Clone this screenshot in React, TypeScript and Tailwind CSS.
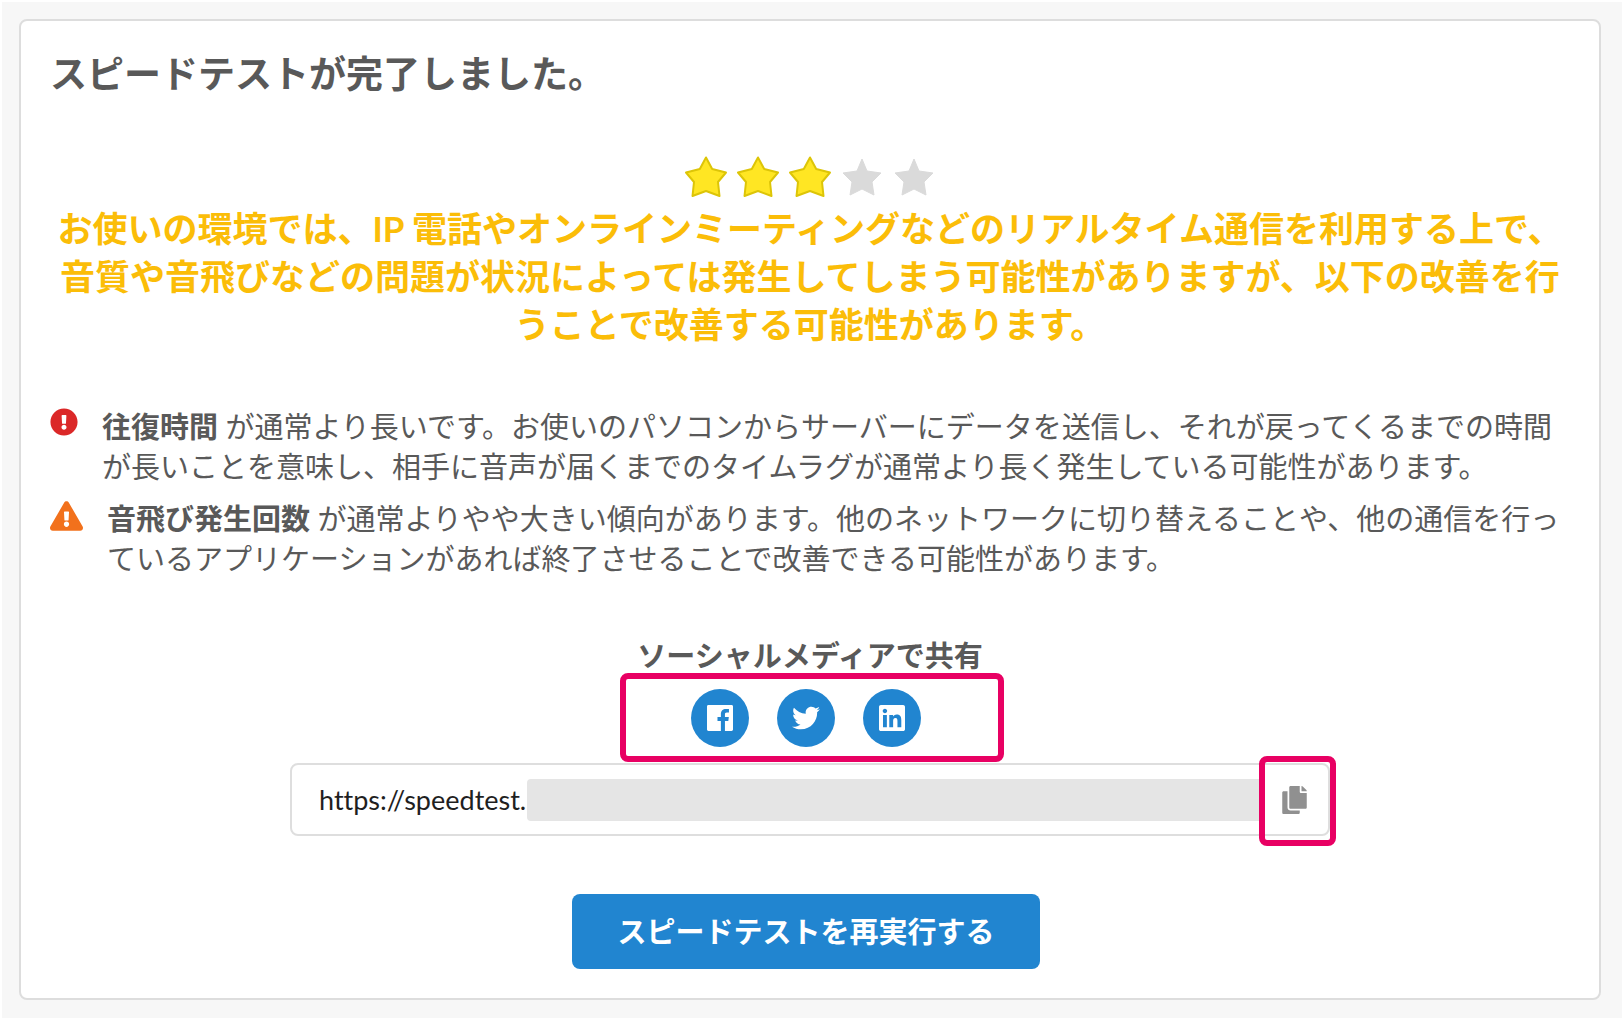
import React from "react";
import {
  FaCopy,
  FaExclamationCircle,
  FaExclamationTriangle,
  FaLinkedin,
  FaTwitter,
} from "react-icons/fa";

const ACTIVE_STAR_PATH =
  "M21 1.5 L27.2 13 L41 16.5 L33 26 L34.5 40 L21 35 L7.5 40 L9 26 L1 16.5 L14.8 13 Z";
const IDLE_STAR_PATH =
  "M21 3 L26 15 L40 17 L31 26 L33 39 L21 33 L9 39 L11 26 L2 17 L16 15 Z";

function Star({ active }: { active: boolean }) {
  return (
    <svg viewBox="0 0 42 42" className="size-[42px] overflow-visible" aria-hidden="true">
      <path
        d={active ? ACTIVE_STAR_PATH : IDLE_STAR_PATH}
        strokeLinejoin="round"
        strokeWidth={active ? 2 : 1}
        className={active ? "fill-[#ffe623] stroke-[#ddc507]" : "fill-[#dadada] stroke-[#dadada]"}
      />
    </svg>
  );
}

function FacebookIcon() {
  return (
    <svg viewBox="0 0 448 512" className="h-[30px] w-[26px]" fill="currentColor" aria-hidden="true">
      <path d="M448 56.7v398.5c0 13.7-11.1 24.7-24.7 24.7H309.1V306.5h58.2l8.7-67.6h-67v-43.2c0-19.6 5.4-32.9 33.5-32.9h35.8v-60.5c-6.2-.8-27.4-2.7-52.2-2.7-51.6 0-87 31.5-87 89.4v49.9h-58.4v67.6h58.4V480H24.7C11.1 480 0 468.9 0 455.3V56.7C0 43.1 11.1 32 24.7 32h398.5c13.7 0 24.8 11.1 24.8 24.7z" />
    </svg>
  );
}

function ShareButton({ label, children }: { label: string; children: React.ReactNode }) {
  return (
    <button
      type="button"
      aria-label={label}
      className="flex size-[58px] items-center justify-center rounded-full bg-[#2185d0] text-white"
    >
      {children}
    </button>
  );
}

function Finding({
  icon,
  term,
  children,
}: {
  icon: React.ReactNode;
  term: string;
  children: React.ReactNode;
}) {
  return (
    <li className="flex items-start gap-6">
      <span className="shrink-0 pt-px">{icon}</span>
      <p className="min-w-0 flex-1">
        <strong className="font-bold">{term}</strong> {children}
      </p>
    </li>
  );
}

export default function App() {
  return (
    <main className="min-h-screen border-t-2 border-l-2 border-white bg-[#f7f7f7] pt-[17px] pr-[21px] pb-[18px] pl-[17px] font-[Lato,'Noto_Sans_CJK_JP',sans-serif] text-[#595959]">
      <section className="flex flex-col rounded-lg border-2 border-[#dddddd] bg-white px-[29px] pt-[30px] pb-[29px]">
        <h1 className="text-[37px] leading-[46px] font-bold">スピードテストが完了しました。</h1>

        <div role="img" aria-label="5つ星中3つ星" className="mt-[59px] flex h-12 justify-center gap-[10px]">
          {[true, true, true, false, false].map((active, i) => (
            <Star key={i} active={active} />
          ))}
        </div>

        <p className="text-center text-[35px] leading-[48px] font-bold text-[#fbbd08]">
          お使いの環境では、IP 電話やオンラインミーティングなどのリアルタイム通信を利用する上で、音質や音飛びなどの問題が状況によっては発生してしまう可能性がありますが、以下の改善を行うことで改善する可能性があります。
        </p>

        <ul className="mt-[59px] flex flex-col gap-3 text-[29px] leading-[40px]">
          <Finding icon={<FaExclamationCircle className="size-[28px] text-[#db2828]" />} term="往復時間">
            が通常より長いです。お使いのパソコンからサーバーにデータを送信し、それが戻ってくるまでの時間が長いことを意味し、相手に音声が届くまでのタイムラグが通常より長く発生している可能性があります。
          </Finding>
          <Finding
            icon={<FaExclamationTriangle className="h-[32px] w-[33px] text-[#f2711c]" />}
            term="音飛び発生回数"
          >
            が通常よりやや大きい傾向があります。他のネットワークに切り替えることや、他の通信を行っているアプリケーションがあれば終了させることで改善できる可能性があります。
          </Finding>
        </ul>

        <h2 className="mt-[60px] text-center text-[29px] leading-[34px] font-bold">
          ソーシャルメディアで共有
        </h2>

        <div className="ml-1 flex h-[89px] w-[384px] items-center justify-center gap-7 self-center rounded-lg border-6 border-[#e80063] pr-3">
          <ShareButton label="Facebook">
            <FacebookIcon />
          </ShareButton>
          <ShareButton label="Twitter">
            <FaTwitter className="size-[28px]" />
          </ShareButton>
          <ShareButton label="LinkedIn">
            <FaLinkedin className="h-[30px] w-[26px]" />
          </ShareButton>
        </div>

        <div className="relative mx-auto mt-px flex h-[73px] w-full max-w-[1040px] items-center rounded-lg border-2 border-[#dedede] pl-[27px]">
          <input
            type="text"
            readOnly
            aria-label="共有URL"
            value="https://speedtest."
            className="w-[208px] shrink-0 text-[27px] leading-[34px] text-[#1f1f1f] outline-none [font-variant-ligatures:none]"
          />
          <span className="h-[42px] min-w-0 flex-1 rounded-l bg-[#e5e5e5]" />
          <button
            type="button"
            aria-label="URLをコピー"
            className="flex w-[68px] shrink-0 items-center justify-center text-[#909090]"
          >
            <FaCopy className="h-[28px] w-[25px]" />
          </button>
          <span className="pointer-events-none absolute -top-[9px] -right-2 h-[90px] w-[77px] rounded-lg border-6 border-[#e80063]" />
        </div>

        <button
          type="button"
          className="mt-[58px] mr-2 self-center rounded-lg bg-[#2185d0] px-[45px] py-[18px] text-[29px] leading-[39px] font-bold text-white"
        >
          スピードテストを再実行する
        </button>
      </section>
    </main>
  );
}
